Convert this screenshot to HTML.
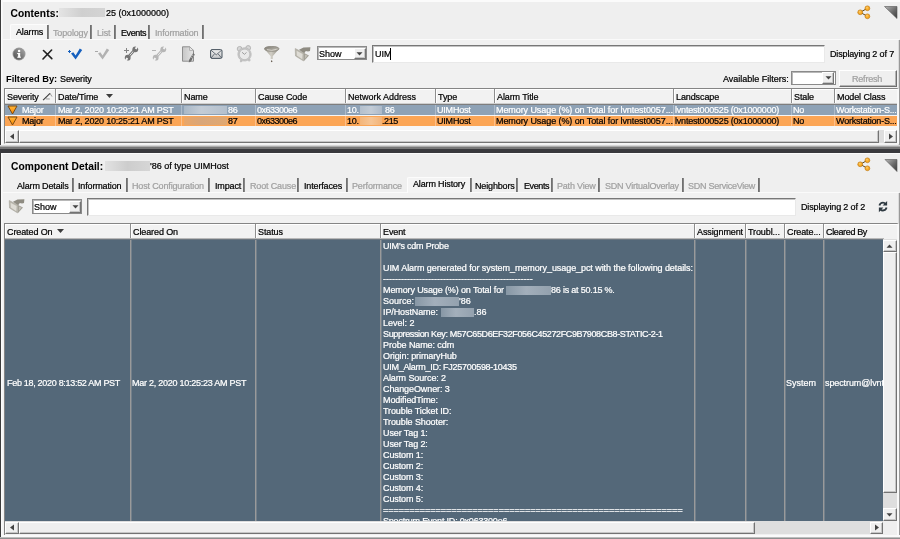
<!DOCTYPE html>
<html>
<head>
<meta charset="utf-8">
<title>Component Detail</title>
<style>
html,body{margin:0;padding:0;}
body{width:900px;height:539px;overflow:hidden;background:#efefef;font-family:"Liberation Sans",sans-serif;font-size:9px;color:#000;position:relative;-webkit-text-stroke:.22px;}
.a{position:absolute;white-space:nowrap;}
.t{position:absolute;white-space:nowrap;line-height:11px;height:11px;}
.b{font-weight:bold;-webkit-text-stroke:0;}
.h1{font-size:10.2px;font-weight:bold;letter-spacing:.1px;-webkit-text-stroke:.08px;}
.dis{color:#a0a0a0;}
.sep{position:absolute;width:2px;background:linear-gradient(90deg,#666,#909090);height:14px;}
.hdr{letter-spacing:-.1px;position:absolute;background:#f2f2f2;border-right:1px solid #8e8e8e;box-sizing:border-box;height:14px;line-height:16px;padding-left:2px;box-shadow:inset 1px 1px 0 #fff;white-space:nowrap;overflow:hidden;}
.cell{letter-spacing:-.2px;position:absolute;box-sizing:border-box;height:10px;line-height:10px;padding-left:1px;white-space:nowrap;overflow:hidden;}
.r1 .cell{background:#8ea2b6;color:#fff;border-right:1px solid #aebccb;}
.r2 .cell{background:#fba555;color:#000;border-right:1px solid #fcc08a;}
.inp{position:absolute;background:#fff;border:1px solid #777;border-bottom-color:#e9e9e9;border-right-color:#e9e9e9;box-sizing:border-box;box-shadow:inset 1px 1px 0 #c4c4c4;}
.sel{border-color:#8a8a8a !important;box-shadow:inset 1px 1px 0 #b8b8b8 !important;}
.sb{position:absolute;background:#dedede;}
.sbtn{position:absolute;background:#efefef;border:1px solid #fff;border-right-color:#737373;border-bottom-color:#737373;box-sizing:border-box;box-shadow:inset -1px -1px 0 #c6c6c6;}
.big{position:absolute;background:#546879;top:240px;height:281px;border-right:1px solid #9a9a9a;box-sizing:border-box;color:#fff;box-shadow:inset 1px 0 0 #73808b;}
</style>
</head>
<body>
<div id="root" style="position:absolute;left:0;top:0;width:900px;height:539px;will-change:transform">
<!-- frame lines -->
<div class="a" style="left:0;top:0;width:900px;height:2px;background:#fbfbfb"></div>
<div class="a" style="left:0;top:0;width:1px;height:539px;background:#3c3c3c"></div><div class="a" style="left:1px;top:0;width:2px;height:146px;background:linear-gradient(90deg,#fdfdfd,#f4f4f4)"></div>

<!-- ============ PANEL 1 ============ -->
<div id="p1">
<span class="t h1" style="left:10.5px;top:8px">Contents:</span>
<span class="t" style="left:106px;top:8px;font-size:9px">25 (0x1000000)</span>
<div class="a" style="left:59px;top:8px;width:46px;height:9px;background:linear-gradient(90deg,#e4e4e4,#cfcfcf 50%,#d4d4d4)"></div>

<!-- tabs -->
<div class="a" style="left:10px;top:24px;width:38px;height:16px;background:#f4f4f4;border-top:1px solid #fcfcfc;border-left:1px solid #fcfcfc;box-sizing:border-box;border-radius:2px 0 0 0"></div>
<span class="t" style="left:16px;top:27px;letter-spacing:-.15px">Alarms</span>
<div class="sep" style="left:47px;top:25px"></div>
<span class="t dis" style="left:53px;top:28px;letter-spacing:-.15px">Topology</span>
<div class="sep" style="left:90px;top:25px"></div>
<span class="t dis" style="left:97px;top:28px;letter-spacing:-.15px">List</span>
<div class="sep" style="left:114px;top:25px"></div>
<span class="t" style="left:121px;top:28px;letter-spacing:-.4px">Events</span>
<div class="sep" style="left:148px;top:25px"></div>
<span class="t dis" style="left:155px;top:28px;letter-spacing:-.15px">Information</span>
<div class="sep" style="left:202px;top:25px"></div>
<!-- tab content area -->
<div class="a" style="left:3px;top:39px;width:896px;height:108px;background:#f1f1f1;border-top:1px solid #fafafa;box-sizing:border-box"></div>
<div class="a" style="left:898px;top:40px;width:2px;height:106px;background:linear-gradient(90deg,#dcdcdc 50%,#999 50%)"></div>

<!-- toolbar icons -->
<svg class="a" style="left:12px;top:47px" width="14" height="14" viewBox="0 0 14 14"><defs><linearGradient id="ig" x1="0" y1="1" x2="1" y2="0"><stop offset="0" stop-color="#4e4e4e"/><stop offset="1" stop-color="#a8a8a8"/></linearGradient></defs><circle cx="7" cy="7" r="6.5" fill="#9c9c9c"/><circle cx="7" cy="7" r="5.7" fill="url(#ig)"/><rect x="6.1" y="6" width="2.1" height="4.4" fill="#fff"/><rect x="5.2" y="6" width="2" height="1" fill="#fff"/><rect x="5.2" y="9.7" width="3.8" height="1" fill="#fff"/><circle cx="7.1" cy="3.9" r="1.25" fill="#fff"/></svg>
<svg class="a" style="left:42px;top:49px" width="11" height="11" viewBox="0 0 11 11"><path d="M1.5 1.5 L9.8 9.6 M9.6 1 L1 10" stroke="#222" stroke-width="1.6" fill="none" stroke-linecap="round"/></svg>
<svg class="a" style="left:67px;top:47px" width="16" height="14" viewBox="0 0 16 14"><path d="M4 6.6 L6.3 5.2 L8.6 8.4 L12.8 1.6 L15.2 3 L8.6 12.4 Z" fill="#1660be"/><path d="M1 4.5 H4 M2.5 3 V6" stroke="#1660be" stroke-width="1" fill="none"/></svg>
<svg class="a" style="left:94px;top:47px" width="16" height="14" viewBox="0 0 16 14"><path d="M4 6.6 L6.3 5.2 L8.6 8.4 L12.8 1.6 L15.2 3 L8.6 12.4 Z" fill="#b2b2b2"/><path d="M1 4.5 H4" stroke="#a8a8a8" stroke-width="1" fill="none"/></svg>
<svg class="a" style="left:122px;top:46px" width="17" height="16" viewBox="0 0 17 16"><path d="M5.7 11.7 L13.3 3.2" stroke="#747474" stroke-width="2.7" fill="none"/><path d="M7.2 10 L11.8 4.9" stroke="#eeeeee" stroke-width=".9" fill="none"/><circle cx="13.3" cy="3.3" r="2.9" fill="#747474"/><path d="M13.7 3 L16 -1" stroke="#f1f1f1" stroke-width="2" fill="none"/><circle cx="5.7" cy="11.7" r="2.9" fill="#747474"/><path d="M5.3 12.1 L3 16" stroke="#f1f1f1" stroke-width="2" fill="none"/><path d="M2 4.5 H7 M4.5 2 V7" stroke="#858585" stroke-width="1" fill="none"/></svg>
<svg class="a" style="left:150px;top:46px" width="17" height="16" viewBox="0 0 17 16"><path d="M5.7 11.7 L13.3 3.2" stroke="#b6b6b6" stroke-width="2.7" fill="none"/><path d="M7.2 10 L11.8 4.9" stroke="#eeeeee" stroke-width=".9" fill="none"/><circle cx="13.3" cy="3.3" r="2.9" fill="#b6b6b6"/><path d="M13.7 3 L16 -1" stroke="#f1f1f1" stroke-width="2" fill="none"/><circle cx="5.7" cy="11.7" r="2.9" fill="#b6b6b6"/><path d="M5.3 12.1 L3 16" stroke="#f1f1f1" stroke-width="2" fill="none"/><path d="M2 4.5 H6" stroke="#b4b4b4" stroke-width="1" fill="none"/></svg>
<svg class="a" style="left:181px;top:46px" width="15" height="17" viewBox="0 0 15 17"><defs><linearGradient id="dg" x1="0" y1="0" x2="1" y2="0"><stop offset="0" stop-color="#c6c6c6"/><stop offset="1" stop-color="#e6e6e6"/></linearGradient></defs><path d="M1.5 0.8 H8.6 L12.5 4.4 V15.2 H1.5 Z" fill="url(#dg)" stroke="#8e8e8e" stroke-width="1"/><path d="M8.6 0.8 V4.4 H12.5 Z" fill="#f4f4f4" stroke="#9a9a9a" stroke-width=".7"/><path d="M12.2 7 L13.8 8.4 L10 15.4 L7.8 16.4 L8 14 Z" fill="#6f6f6f"/><path d="M11.2 9 L12.6 10.2 M10.2 11 L11.6 12.2" stroke="#d8d8d8" stroke-width=".9"/></svg>
<svg class="a" style="left:210px;top:49px" width="13" height="10" viewBox="0 0 13 10"><defs><linearGradient id="eg" x1="0" y1="0" x2="0" y2="1"><stop offset="0" stop-color="#f0f0f0"/><stop offset="1" stop-color="#c4c6c8"/></linearGradient></defs><rect x="0.6" y="0.6" width="11.4" height="8.8" rx="1.4" fill="url(#eg)" stroke="#47525d" stroke-width="1"/><path d="M1 1.2 L6.3 5.8 L11.6 1.2 M1 9 L4.4 5 M11.6 9 L8.2 5" stroke="#47525d" stroke-width=".8" fill="none"/></svg>
<svg class="a" style="left:236px;top:45px" width="17" height="18" viewBox="0 0 17 18"><g transform="rotate(-6 8.5 9)"><circle cx="4.2" cy="3.4" r="2.4" fill="#d6d6d6" stroke="#b2b2b2" stroke-width=".9"/><circle cx="12.8" cy="3.4" r="2.4" fill="#d6d6d6" stroke="#b2b2b2" stroke-width=".9"/><circle cx="4.4" cy="15.6" r="1.3" fill="#c2c2c2"/><circle cx="12.6" cy="15.6" r="1.3" fill="#c2c2c2"/><circle cx="8.5" cy="9.4" r="6.7" fill="#c9c9c9" stroke="#b4b4b4" stroke-width=".6"/><circle cx="8.5" cy="9.4" r="5.3" fill="#e9e9e9" stroke="#adadad" stroke-width=".6"/><path d="M6.2 7 L8.5 9.4 L10.6 7.6" stroke="#9a9a9a" stroke-width=".9" fill="none"/></g></svg>
<svg class="a" style="left:264px;top:46px" width="16" height="17" viewBox="0 0 16 17"><defs><linearGradient id="fg" x1="0" y1="0" x2="1" y2="0"><stop offset="0" stop-color="#9a978d"/><stop offset=".45" stop-color="#d2cfc6"/><stop offset="1" stop-color="#8f8c82"/></linearGradient><linearGradient id="fg2" x1="0" y1="0" x2="1" y2="1"><stop offset="0" stop-color="#7e7b72"/><stop offset="1" stop-color="#c4c1b8"/></linearGradient></defs><path d="M0.4 2.8 L6.7 10.2 V12.9 H8.7 V10.2 L15 2.8 Q7.7 7.2 0.4 2.8 Z" fill="url(#fg)"/><ellipse cx="7.7" cy="2.8" rx="7.3" ry="2.5" fill="url(#fg2)" stroke="#8a877d" stroke-width=".8"/><path d="M3 3.6 Q7.7 5.4 12.6 3.2" stroke="#dedbd3" stroke-width=".8" fill="none"/><path d="M7.7 14 L8.5 15.6 L7.7 16.2 L6.9 15.6 Z" fill="#5c5144"/></svg>
<svg class="a" style="left:294px;top:46px" width="17" height="16" viewBox="0 0 17 16"><path d="M5 3.8 L9.5 1.5 L16.4 1.2 L16 5 L14 5.6 L11.8 5 L10 7.4 Z" fill="#8f8c82"/><path d="M10 7 L15 9.4 L10 15 Z" fill="#a29f95"/><path d="M11 8.4 L13.6 9.6 L10.8 13 Z" fill="#c2bfb6"/><path d="M1.2 2.5 L10 7 L9.6 15 L1.5 10 Z" fill="#b7b4aa" stroke="#a19e94" stroke-width=".5"/><path d="M2.6 4.8 L8.6 7.9 L8.3 13.2 L2.8 9.5 Z" fill="#dedcd5"/></svg>
<!-- show select -->
<div class="inp sel" style="left:317px;top:46px;width:50px;height:14px"></div>
<span class="t" style="left:319px;top:48px;line-height:12px">Show</span>
<div class="sbtn" style="left:354px;top:48px;width:12px;height:11px"></div>
<svg class="a" style="left:356px;top:52px" width="7" height="4" viewBox="0 0 7 4"><path d="M0.5 0.3 H6.5 L3.5 3.6 Z" fill="#444"/></svg>
<!-- search -->
<div class="inp" style="left:372px;top:45px;width:453px;height:18px"></div>
<span class="t" style="left:375px;top:49px">UIM</span>
<div class="a" style="left:390px;top:48px;width:1px;height:12px;background:#000"></div>
<span class="t" style="left:830px;top:49px;letter-spacing:-.15px">Displaying 2 of 7</span>

<!-- filter row -->
<span class="t b" style="left:6px;top:74px;font-size:9.3px">Filtered By:</span>
<span class="t" style="left:60px;top:74px;letter-spacing:-.1px">Severity</span>
<span class="t" style="left:723px;top:73px;line-height:12px">Available Filters:</span>
<div class="inp sel" style="left:791px;top:71px;width:45px;height:14px"></div>
<div class="sbtn" style="left:822px;top:72px;width:12px;height:12px"></div>
<svg class="a" style="left:825px;top:76px" width="7" height="4" viewBox="0 0 7 4"><path d="M0.5 0.3 H6.5 L3.5 3.6 Z" fill="#444"/></svg>
<div class="a" style="left:839px;top:70px;width:58px;height:17px;background:#efefef;border:1px solid #fff;border-right-color:#6f6f6f;border-bottom-color:#6f6f6f;box-sizing:border-box;box-shadow:inset -1px -1px 0 #b4b4b4"></div>
<span class="t dis" style="left:852px;top:73px;letter-spacing:-.2px;line-height:12px">Refresh</span>

<!-- table 1 -->
<div class="a" style="left:4px;top:88px;width:895px;height:56px;background:#f6f6f6;border:1px solid #858585;border-right:2px solid #f9f9f9;border-bottom-color:#f4f4f4;box-sizing:border-box"></div>
<div class="a" style="left:5px;top:89px;width:892px;height:16px;background:#cfcfcf;border-bottom:1px solid #7e7e7e;box-sizing:border-box"></div>
<div class="hdr" style="left:5px;top:89px;width:51px;padding-left:2px">Severity</div>
<div class="hdr" style="left:56px;top:89px;width:126px">Date/Time</div>
<div class="hdr" style="left:182px;top:89px;width:74px">Name</div>
<div class="hdr" style="left:256px;top:89px;width:90px">Cause Code</div>
<div class="hdr" style="left:346px;top:89px;width:90px;letter-spacing:0">Network Address</div>
<div class="hdr" style="left:436px;top:89px;width:59px">Type</div>
<div class="hdr" style="left:495px;top:89px;width:179px">Alarm Title</div>
<div class="hdr" style="left:674px;top:89px;width:118px">Landscape</div>
<div class="hdr" style="left:792px;top:89px;width:43px">Stale</div>
<div class="hdr" style="left:835px;top:89px;width:62px;border-right:0">Model Class</div>
<svg class="a" style="left:42px;top:92px" width="11" height="9" viewBox="0 0 11 9"><path d="M8 1.3 L10 4.6 M3.8 6.9 L7.8 7" stroke="#9c9c9c" stroke-width="1" fill="none"/><path d="M1.1 8.2 L8 1.3" stroke="#3a3a3a" stroke-width="1.1" fill="none"/></svg>
<svg class="a" style="left:106px;top:94px" width="7" height="4" viewBox="0 0 7 4"><path d="M0 0 H7 L3.5 4 Z" fill="#3c3c3c"/></svg>

<div class="r1">
<div class="cell" style="left:5px;top:105px;width:51px;padding-left:17px;">Major</div>
<div class="cell" style="left:56px;top:105px;width:126px;padding-left:2px;">Mar 2, 2020 10:29:21 AM PST</div>
<div class="cell" style="left:182px;top:105px;width:74px;padding-left:46px">86</div>
<div class="a" style="left:184px;top:106px;width:43px;height:8px;background:linear-gradient(90deg,#a9b8c7,#c3ccd6 40%,#b4c0cd)"></div>
<div class="cell" style="left:256px;top:105px;width:90px;letter-spacing:-.5px">0x63300e6</div>
<div class="cell" style="left:346px;top:105px;width:90px;">10.<span style="margin-left:26px">86</span></div>
<div class="a" style="left:360px;top:106px;width:22px;height:8px;background:linear-gradient(90deg,#b4c0cd,#c3ccd6 50%,#adbac9)"></div>
<div class="cell" style="left:436px;top:105px;width:59px;">UIMHost</div>
<div class="cell" style="left:495px;top:105px;width:179px;letter-spacing:-.08px">Memory Usage (%) on Total for lvntest0057...</div>
<div class="cell" style="left:674px;top:105px;width:118px;">lvntest000525 (0x1000000)</div>
<div class="cell" style="left:792px;top:105px;width:43px;">No</div>
<div class="cell" style="left:835px;top:105px;width:62px;border-right:0">Workstation-S...</div>
</div>
<div class="r2">
<div class="cell" style="left:5px;top:116px;width:51px;padding-left:17px;">Major</div>
<div class="cell" style="left:56px;top:116px;width:126px;padding-left:2px;">Mar 2, 2020 10:25:21 AM PST</div>
<div class="cell" style="left:182px;top:116px;width:74px;padding-left:46px">87</div>
<div class="a" style="left:184px;top:117px;width:43px;height:8px;background:linear-gradient(90deg,#e9a668,#d9a679 40%,#e0a872)"></div>
<div class="cell" style="left:256px;top:116px;width:90px;letter-spacing:-.5px">0x63300e6</div>
<div class="cell" style="left:346px;top:116px;width:90px;">10.<span style="margin-left:23px;letter-spacing:-.4px">.215</span></div>
<div class="a" style="left:360px;top:117px;width:22px;height:8px;background:linear-gradient(90deg,#f3b57a,#f6c595 50%,#f2b378)"></div>
<div class="cell" style="left:436px;top:116px;width:59px;">UIMHost</div>
<div class="cell" style="left:495px;top:116px;width:179px;letter-spacing:-.08px">Memory Usage (%) on Total for lvntest0057...</div>
<div class="cell" style="left:674px;top:116px;width:118px;">lvntest000525 (0x1000000)</div>
<div class="cell" style="left:792px;top:116px;width:43px;">No</div>
<div class="cell" style="left:835px;top:116px;width:62px;border-right:0">Workstation-S...</div>
</div>

<svg class="a" style="left:7px;top:105px" width="11" height="10" viewBox="0 0 11 10"><defs><linearGradient id="sg105" x1="0" y1="0" x2="0" y2="1"><stop offset="0" stop-color="#ffb63a"/><stop offset="1" stop-color="#ff8a00"/></linearGradient></defs><path d="M1 1 H10 L5.5 9 Z" fill="url(#sg105)" stroke="#7a4a12" stroke-width="1" stroke-linejoin="round"/></svg>
<svg class="a" style="left:7px;top:116px" width="11" height="10" viewBox="0 0 11 10"><defs><linearGradient id="sg116" x1="0" y1="0" x2="0" y2="1"><stop offset="0" stop-color="#ffb63a"/><stop offset="1" stop-color="#ff8a00"/></linearGradient></defs><path d="M1 1 H10 L5.5 9 Z" fill="url(#sg116)" stroke="#7a4a12" stroke-width="1" stroke-linejoin="round"/></svg>
<!-- hscroll 1 -->
<div class="sb" style="left:5px;top:130px;width:892px;height:13px"></div>
<div class="sbtn" style="left:5px;top:130px;width:14px;height:13px"></div>
<svg class="a" style="left:10px;top:133px" width="4" height="7" viewBox="0 0 4 7"><path d="M4 0.5 V6.5 L0 3.5 Z" fill="#444"/></svg>
<div class="sbtn" style="left:19px;top:130px;width:860px;height:13px;background:#efefef"></div>
<div class="sbtn" style="left:884px;top:130px;width:13px;height:13px"></div>
<svg class="a" style="left:889px;top:133px" width="4" height="7" viewBox="0 0 4 7"><path d="M0 0.5 V6.5 L4 3.5 Z" fill="#444"/></svg>
<!-- top-right icons -->
<svg class="a" style="left:857px;top:5px" width="14" height="15" viewBox="0 0 14 15"><path d="M3.2 7.3 L10.4 3.3 M3.2 7.3 L10.4 11.3" stroke="#5c4212" stroke-width="1" fill="none"/><g fill="#f8ab28" stroke="#c07a12" stroke-width=".7"><circle cx="3.2" cy="7.3" r="2.4"/><circle cx="10.4" cy="3.3" r="2.4"/><circle cx="10.4" cy="11.3" r="2.4"/></g><g fill="#fcc860"><circle cx="2.8" cy="6.8" r="1"/><circle cx="10" cy="2.8" r="1"/><circle cx="10" cy="10.8" r="1"/></g></svg>
<svg class="a" style="left:884px;top:6px" width="14" height="13" viewBox="0 0 14 13"><defs><linearGradient id="tg" x1="0" y1="0" x2="1" y2="1"><stop offset="0" stop-color="#b8b8b8"/><stop offset=".55" stop-color="#6a6a6a"/><stop offset="1" stop-color="#3c3c3c"/></linearGradient></defs><path d="M0.5 0.5 H13 V12.5 Z" fill="url(#tg)" stroke="#555" stroke-width=".6"/></svg>
</div>

<!-- ============ DIVIDER ============ -->
<div class="a" style="left:0;top:145px;width:900px;height:1px;background:#d6d6d6"></div><div class="a" style="left:0;top:146px;width:900px;height:1px;background:#ababab"></div><div class="a" style="left:0;top:147px;width:900px;height:2px;background:#777"></div><div class="a" style="left:0;top:149px;width:900px;height:4px;background:linear-gradient(#39393d,#39393d 3.5px,#999)"></div>

<!-- ============ PANEL 2 ============ -->
<div id="p2">
<span class="t h1" style="left:11px;top:161px">Component Detail:</span>

<div class="a" style="left:1px;top:153px;width:899px;height:1px;background:#fbfbfb"></div>
<div class="a" style="left:1px;top:153px;width:2px;height:384px;background:linear-gradient(90deg,#fdfdfd,#f4f4f4)"></div>
<div class="a" style="left:105px;top:161px;width:45px;height:10px;background:linear-gradient(90deg,#e2e2e2,#cdcdcd 50%,#d6d6d6)"></div>
<span class="t" style="left:150px;top:161px">'86 of type UIMHost</span>
<!-- tab content area -->
<div class="a" style="left:3px;top:192px;width:896px;height:343px;background:#f1f1f1;border-top:1px solid #fafafa;box-sizing:border-box"></div>
<div class="a" style="left:898px;top:193px;width:2px;height:344px;background:linear-gradient(90deg,#dcdcdc 50%,#999 50%)"></div>
<div class="a" style="left:407px;top:177px;width:64px;height:16px;background:#f4f4f4;border-top:1px solid #fcfcfc;border-left:1px solid #fcfcfc;box-sizing:border-box;border-radius:2px 0 0 0"></div>
<span class="t" style="left:17px;top:181px;letter-spacing:-.15px">Alarm Details</span>
<span class="t" style="left:78px;top:181px;letter-spacing:-.15px">Information</span>
<span class="t dis" style="left:132px;top:181px;letter-spacing:-.15px">Host Configuration</span>
<span class="t" style="left:215px;top:181px;letter-spacing:-.15px">Impact</span>
<span class="t dis" style="left:250px;top:181px;letter-spacing:-.15px">Root Cause</span>
<span class="t" style="left:304px;top:181px;letter-spacing:-.15px">Interfaces</span>
<span class="t dis" style="left:352px;top:181px;letter-spacing:-.15px">Performance</span>
<span class="t" style="left:413px;top:179px;letter-spacing:-.15px">Alarm History</span>
<span class="t" style="left:475px;top:181px;letter-spacing:-.15px">Neighbors</span>
<span class="t" style="left:524px;top:181px;letter-spacing:-.4px">Events</span>
<span class="t dis" style="left:557px;top:181px;letter-spacing:-.2px">Path View</span>
<span class="t dis" style="left:605px;top:181px;letter-spacing:-.22px">SDN VirtualOverlay</span>
<span class="t dis" style="left:688px;top:181px;letter-spacing:-.25px">SDN ServiceView</span>
<div class="sep" style="left:72px;top:178px"></div>
<div class="sep" style="left:126px;top:178px"></div>
<div class="sep" style="left:208px;top:178px"></div>
<div class="sep" style="left:243px;top:178px"></div>
<div class="sep" style="left:297px;top:178px"></div>
<div class="sep" style="left:346px;top:178px"></div>
<div class="sep" style="left:470px;top:178px"></div>
<div class="sep" style="left:516px;top:178px"></div>
<div class="sep" style="left:551px;top:178px"></div>
<div class="sep" style="left:598px;top:178px"></div>
<div class="sep" style="left:682px;top:178px"></div>
<div class="sep" style="left:758px;top:178px"></div>

<!-- toolbar 2 -->
<svg class="a" style="left:8px;top:198px" width="17" height="16" viewBox="0 0 17 16"><path d="M5 3.8 L9.5 1.5 L16.4 1.2 L16 5 L14 5.6 L11.8 5 L10 7.4 Z" fill="#8f8c82"/><path d="M10 7 L15 9.4 L10 15 Z" fill="#a29f95"/><path d="M11 8.4 L13.6 9.6 L10.8 13 Z" fill="#c2bfb6"/><path d="M1.2 2.5 L10 7 L9.6 15 L1.5 10 Z" fill="#b7b4aa" stroke="#a19e94" stroke-width=".5"/><path d="M2.6 4.8 L8.6 7.9 L8.3 13.2 L2.8 9.5 Z" fill="#dedcd5"/></svg>
<div class="inp sel" style="left:32px;top:199px;width:50px;height:15px"></div>
<span class="t" style="left:34px;top:201px;line-height:12px">Show</span>
<div class="sbtn" style="left:69px;top:201px;width:12px;height:12px"></div>
<svg class="a" style="left:72px;top:205px" width="7" height="4" viewBox="0 0 7 4"><path d="M0.5 0.3 H6.5 L3.5 3.6 Z" fill="#444"/></svg>
<div class="inp" style="left:87px;top:198px;width:709px;height:18px"></div>
<span class="t" style="left:801px;top:202px;letter-spacing:-.15px">Displaying 2 of 2</span>
<svg class="a" style="left:877px;top:200px" width="12" height="13" viewBox="0 0 12 13"><g id="ra"><path d="M2.4 5.6 Q3.2 2.7 6 2.7 Q7.6 2.7 8.6 3.9" stroke="#2f3a42" stroke-width="1.8" fill="none"/><path d="M10.1 1 V5.6 H5.6 Z" fill="#2f3a42"/></g><use href="#ra" transform="rotate(180 6 6.6)"/></svg>

<!-- table 2 -->
<div class="a" style="left:4px;top:223px;width:895px;height:313px;background:#f0f0f0;border:1px solid #858585;border-right:2px solid #f9f9f9;border-bottom-color:#f4f4f4;box-sizing:border-box"></div>
<div class="a" style="left:5px;top:224px;width:892px;height:16px;background:#b8b8b8;border-bottom:1px solid #6d7780;box-sizing:border-box"></div>
<div class="hdr" style="left:5px;top:224px;width:126px;padding-left:2px">Created On</div>
<div class="hdr" style="left:131px;top:224px;width:125px">Cleared On</div>
<div class="hdr" style="left:256px;top:224px;width:125px">Status</div>
<div class="hdr" style="left:381px;top:224px;width:314px">Event</div>
<div class="hdr" style="left:695px;top:224px;width:51px">Assignment</div>
<div class="hdr" style="left:746px;top:224px;width:39px">Troubl...</div>
<div class="hdr" style="left:785px;top:224px;width:39px">Create...</div>
<div class="hdr" style="left:824px;top:224px;width:73px;border-right:0;letter-spacing:-.35px">Cleared By</div><div class="a" style="left:884px;top:238px;width:13px;height:2px;background:#f2f2f2"></div>
<svg class="a" style="left:57px;top:229px" width="7" height="4" viewBox="0 0 7 4"><path d="M0 0 H7 L3.5 4 Z" fill="#3c3c3c"/></svg>
<div class="big" style="left:5px;width:126px;box-shadow:none"></div>
<div class="big" style="left:131px;width:125px"></div>
<div class="big" style="left:256px;width:125px"></div>
<div class="big" style="left:381px;width:314px"></div>
<div class="big" style="left:695px;width:51px"></div>
<div class="big" style="left:746px;width:39px"></div>
<div class="big" style="left:785px;width:39px"></div>
<div class="big" style="left:824px;width:59px;border-right:0"></div>
<span class="t" style="left:7px;top:377px;color:#fff;letter-spacing:-.3px;line-height:12px">Feb 18, 2020 8:13:52 AM PST</span>
<span class="t" style="left:132px;top:377px;color:#fff;letter-spacing:-.25px;line-height:12px">Mar 2, 2020 10:25:23 AM PST</span>
<span class="t" style="left:786px;top:377px;color:#fff;line-height:12px">System</span>
<span class="t" style="left:825px;top:377px;color:#fff;line-height:12px;letter-spacing:-.1px">spectrum@lvnt</span>
<div class="a" style="left:383px;top:241px;width:311px;height:280px;overflow:hidden;color:#fff">
<span class="t" style="left:0;top:0px;letter-spacing:-.2px">UIM's cdm Probe</span>
<span class="t" style="left:0;top:22px;letter-spacing:-0.07px;">UIM Alarm generated for system_memory_usage_pct with the following details:</span>
<span class="t" style="left:0;top:33px;width:150px;overflow:hidden">------------------------------------------------------------</span>
<span class="t" style="left:0;top:44px;letter-spacing:-0.12px;">Memory Usage (%) on Total for</span>
<span class="t" style="left:0;top:55px;">Source:</span>
<span class="t" style="left:0;top:66px;letter-spacing:-0.1px;">IP/HostName:</span>
<span class="t" style="left:0;top:77px;">Level: 2</span>
<span class="t" style="left:0;top:88px;letter-spacing:-0.37px;">Suppression Key: M57C65D6EF32F056C45272FC9B7908CB8-STATIC-2-1</span>
<span class="t" style="left:0;top:99px;letter-spacing:-0.1px;">Probe Name: cdm</span>
<span class="t" style="left:0;top:110px;letter-spacing:-0.1px;">Origin: primaryHub</span>
<span class="t" style="left:0;top:121px;letter-spacing:-0.28px;">UIM_Alarm_ID: FJ25700598-10435</span>
<span class="t" style="left:0;top:132px;letter-spacing:-0.1px;">Alarm Source: 2</span>
<span class="t" style="left:0;top:143px;letter-spacing:-0.1px;">ChangeOwner: 3</span>
<span class="t" style="left:0;top:154px;letter-spacing:-0.1px;">ModifiedTime:</span>
<span class="t" style="left:0;top:165px;letter-spacing:-0.1px;">Trouble Ticket ID:</span>
<span class="t" style="left:0;top:176px;letter-spacing:-0.1px;">Trouble Shooter:</span>
<span class="t" style="left:0;top:187px;letter-spacing:-0.1px;">User Tag 1:</span>
<span class="t" style="left:0;top:198px;letter-spacing:-0.1px;">User Tag 2:</span>
<span class="t" style="left:0;top:209px;letter-spacing:-0.1px;">Custom 1:</span>
<span class="t" style="left:0;top:220px;letter-spacing:-0.1px;">Custom 2:</span>
<span class="t" style="left:0;top:231px;letter-spacing:-0.1px;">Custom 3:</span>
<span class="t" style="left:0;top:242px;letter-spacing:-0.1px;">Custom 4:</span>
<span class="t" style="left:0;top:253px;letter-spacing:-0.1px;">Custom 5:</span>
<span class="t" style="left:0;top:264px;width:300px;overflow:hidden">======================================================================</span>
<span class="t" style="left:0;top:275px;letter-spacing:-0.2px;">Spectrum Event ID: 0x063300e6</span>
<div class="a" style="left:123px;top:45px;width:45px;height:9px;background:linear-gradient(90deg,#8797a5,#a3afbb 45%,#93a1ae)"></div>
<span class="t" style="left:168px;top:44px;letter-spacing:-.2px">86 is at 50.15 %.</span>
<div class="a" style="left:32px;top:56px;width:44px;height:9px;background:linear-gradient(90deg,#8797a5,#a3afbb 45%,#93a1ae)"></div>
<span class="t" style="left:76px;top:55px">'86</span>
<div class="a" style="left:58px;top:67px;width:33px;height:9px;background:linear-gradient(90deg,#8797a5,#a3afbb 45%,#93a1ae)"></div>
<span class="t" style="left:91px;top:66px">.86</span>
</div>
<!-- v scroll -->
<div class="sb" style="left:883px;top:239px;width:14px;height:282px;background:#dedede"></div>
<div class="sbtn" style="left:883px;top:240px;width:14px;height:12px"></div>
<svg class="a" style="left:886px;top:244px" width="7" height="4" viewBox="0 0 7 4"><path d="M0.5 3.7 H6.5 L3.5 0.4 Z" fill="#444"/></svg>
<div class="sbtn" style="left:883px;top:252px;width:14px;height:241px"></div>
<div class="sbtn" style="left:883px;top:508px;width:14px;height:13px"></div>
<svg class="a" style="left:886px;top:513px" width="7" height="4" viewBox="0 0 7 4"><path d="M0.5 0.3 H6.5 L3.5 3.6 Z" fill="#444"/></svg>
<!-- h scroll -->
<div class="sb" style="left:5px;top:521px;width:878px;height:13px;background:#dedede"></div>
<div class="sbtn" style="left:5px;top:522px;width:14px;height:12px"></div>
<svg class="a" style="left:10px;top:524px" width="4" height="7" viewBox="0 0 4 7"><path d="M4 0.5 V6.5 L0 3.5 Z" fill="#444"/></svg>
<div class="sbtn" style="left:19px;top:522px;width:736px;height:12px"></div>
<div class="sbtn" style="left:870px;top:522px;width:13px;height:12px"></div>
<svg class="a" style="left:875px;top:524px" width="4" height="7" viewBox="0 0 4 7"><path d="M0 0.5 V6.5 L4 3.5 Z" fill="#444"/></svg>
<div class="a" style="left:883px;top:521px;width:14px;height:14px;background:#efefef"></div>
<div class="a" style="left:1px;top:535px;width:899px;height:2px;background:#fafafa"></div><div class="a" style="left:0;top:537px;width:900px;height:1px;background:#bdbdbd"></div><div class="a" style="left:0;top:538px;width:900px;height:1px;background:#8f8f8f"></div>
<svg class="a" style="left:857px;top:157px" width="14" height="15" viewBox="0 0 14 15"><path d="M3.2 7.3 L10.4 3.3 M3.2 7.3 L10.4 11.3" stroke="#5c4212" stroke-width="1" fill="none"/><g fill="#f8ab28" stroke="#c07a12" stroke-width=".7"><circle cx="3.2" cy="7.3" r="2.4"/><circle cx="10.4" cy="3.3" r="2.4"/><circle cx="10.4" cy="11.3" r="2.4"/></g><g fill="#fcc860"><circle cx="2.8" cy="6.8" r="1"/><circle cx="10" cy="2.8" r="1"/><circle cx="10" cy="10.8" r="1"/></g></svg>
<svg class="a" style="left:884px;top:159px" width="14" height="13" viewBox="0 0 14 13"><path d="M1 0.5 H13 V12.5 Z" fill="url(#tg)" stroke="#555" stroke-width=".6"/></svg></div>
</div>
</body>
</html>
